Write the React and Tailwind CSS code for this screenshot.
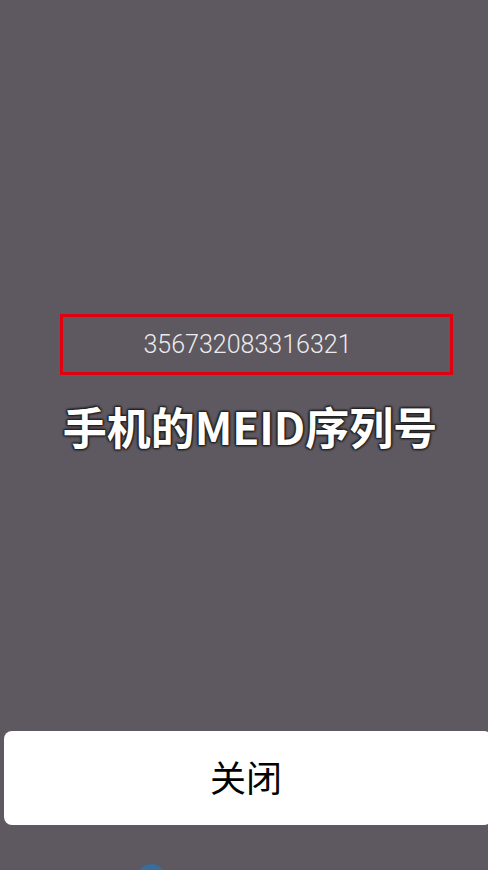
export default function App() {
  return (
    <div className="h-[870px] w-[488px] overflow-hidden bg-[#5e5860] flex flex-col" style={{ fontFamily: '"Noto Sans", "Noto Sans CJK SC", sans-serif' }}>
      <div className="shrink-0 mt-[314px] ml-[60px] w-[393px] h-[61px] border-[3px] border-[#e0000f] flex items-center justify-center">
        <span className="pr-[18px] text-[25px] font-light text-[#ececec]" style={{ fontFamily: 'Roboto, "Noto Sans", sans-serif' }}>356732083316321</span>
      </div>
      <div className="shrink-0 mt-[23px] flex justify-center pl-[12px]">
        <span
          className="text-[44px] font-bold text-white leading-[56px]"
          style={{ fontFamily: '"Noto Sans CJK SC", sans-serif', textShadow: '0 0 2px #222, 1px 1px 2px #222, -1px -1px 2px #222, 1px -1px 2px #222, -1px 1px 2px #222' }}
        >
          手机的MEID序列号
        </span>
      </div>
      <div className="shrink-0 mt-[277px] ml-[4px] h-[94px] w-[488px] rounded-lg bg-white flex items-center justify-center">
        <span className="text-[36px] text-black pr-[4px] pb-[4px]" style={{ fontFamily: '"Noto Sans CJK SC", sans-serif' }}>关闭</span>
      </div>
      <div className="shrink-0 mt-[39px] ml-[136px] w-[30px] h-[30px] rounded-full bg-[#3a6c9c]" />
    </div>
  );
}
